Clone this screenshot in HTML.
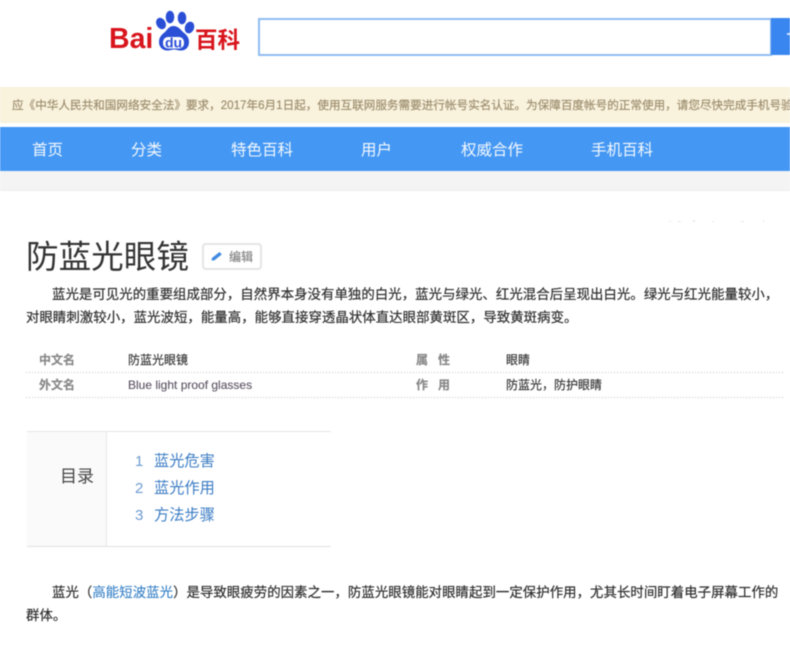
<!DOCTYPE html>
<html lang="zh">
<head>
<meta charset="utf-8">
<title>防蓝光眼镜</title>
<style>
html,body{margin:0;padding:0;background:#fff;}
body{width:790px;height:646px;overflow:hidden;position:relative;font-family:"Liberation Sans","Noto Sans CJK SC",sans-serif;color:#333;}
.a{position:absolute;white-space:nowrap;}
#wrap{position:absolute;left:0;top:0;width:790px;height:646px;overflow:hidden;filter:blur(.4px);}
.n{top:140px;font-size:15.500px;line-height:21px;color:#f4f8fe;}
.t{font-size:13.400px;line-height:20px;color:#2c2c2c;-webkit-text-stroke:.2px #333;letter-spacing:.06px;}
.k{font-size:12px;line-height:17px;font-weight:bold;color:#888;-webkit-text-stroke:.2px #888;}
.v{font-size:12px;line-height:17px;color:#333;-webkit-text-stroke:.15px #333;}
.d{left:26px;width:757px;height:1px;background:repeating-linear-gradient(90deg,#c4c4c4 0 1px,transparent 1px 3px);}
.i{font-size:15.200px;line-height:21px;color:#3b7cc4;}
.o{font-size:15px;line-height:21px;color:#6d9bd1;}
</style>
</head>
<body>
<div id="wrap">
<!-- logo -->
<div class="a" style="left:109px;top:23px;font-size:28.500px;line-height:32px;font-weight:bold;color:#d8141c;">Bai</div>
<svg class="a" style="left:155px;top:9px" width="44" height="46" viewBox="0 0 44 46">
<g fill="#2a4fd6">
<ellipse cx="6" cy="14.500" rx="4.600" ry="6" transform="rotate(-28 6 14.500)"/>
<ellipse cx="15" cy="8" rx="4.300" ry="6.300"/>
<ellipse cx="27" cy="9" rx="4.300" ry="6.300"/>
<ellipse cx="34.500" cy="18.500" rx="4.600" ry="6" transform="rotate(20 34.500 18.500)"/>
<path d="M18.500 17c-4.500 0-6 3.500-9 6.500-3 2-5.500 5-5.500 9.500 0 5 3.500 8.500 8.500 8.500 2.500 0 4.500-1 6.500-1s4 1 7 1c5 0 8-3.500 8-8.500 0-4.500-2.500-7.500-5.500-9.500-3-3-5.500-6.500-10-6.500z"/>
<rect x="8" y="28" width="21" height="11.500" rx="5" fill="#fff"/>
</g>
<text x="18.500" y="38.500" text-anchor="middle" font-family="Liberation Sans" font-size="14" font-weight="bold" fill="#2a4fd6">du</text>
</svg>
<div class="a" style="left:195px;top:27px;font-size:22.500px;line-height:28px;font-weight:bold;color:#d8141c;">百科</div>
<!-- search -->
<div class="a" style="left:258px;top:18px;width:510px;height:34px;border:2px solid #8fbcf0;background:#fff;"></div>
<div class="a" style="left:771px;top:18px;width:19px;height:37px;background:#3a86f0;"></div>
<div class="a" style="left:787px;top:33px;width:3px;height:2px;background:#cfe2fb;"></div>
<!-- notice -->
<div class="a" style="left:0;top:87px;width:790px;height:36px;background:#f9f2dd;"></div>
<div class="a" style="left:12px;top:97px;font-size:11.600px;line-height:17px;color:#9b8c6d;width:778px;overflow:hidden;-webkit-text-stroke:.15px #9b8c6d;">应《中华人民共和国网络安全法》要求，2017年6月1日起，使用互联网服务需要进行帐号实名认证。为保障百度帐号的正常使用，请您尽快完成手机号验证</div>
<!-- nav -->
<div class="a" style="left:0;top:127px;width:790px;height:44px;background:#4498f4;"></div>
<div class="a n" style="left:32px;">首页</div>
<div class="a n" style="left:131px;">分类</div>
<div class="a n" style="left:231px;">特色百科</div>
<div class="a n" style="left:361px;">用户</div>
<div class="a n" style="left:461px;">权威合作</div>
<div class="a n" style="left:591px;">手机百科</div>
<div class="a" style="left:0;top:171px;width:790px;height:19px;background:#f4f4f4;border-bottom:1px solid #ececec;"></div>
<!-- specks -->
<svg class="a" style="left:660px;top:218px" width="130" height="6" viewBox="0 0 130 6"><g fill="#e4e8ee"><rect x="9" y="3" width="2" height="1"/><rect x="18" y="3" width="3" height="1"/><rect x="33" y="2" width="2" height="2"/><rect x="52" y="3" width="2" height="1"/><rect x="81" y="3" width="3" height="1"/><rect x="103" y="2" width="1" height="2"/></g></svg>
<!-- title -->
<div class="a" style="left:26px;top:236px;font-size:32.600px;line-height:42px;color:#333;">防蓝光眼镜</div>
<div class="a" style="left:202px;top:243px;width:56px;height:23px;border:2px solid #e4e4e4;border-radius:4px;background:#fff;"></div>
<svg class="a" style="left:210px;top:250px" width="14" height="13" viewBox="0 0 14 13"><path d="M1.500 10.500l.5-2.500 7.500-6 2.300 2.400-7.500 6z" fill="#3f88e0"/></svg>
<div class="a" style="left:229px;top:250px;font-size:12px;line-height:15px;color:#888;-webkit-text-stroke:.2px #888;">编辑</div>
<!-- intro -->
<div class="a t" style="left:52px;top:285px;">蓝光是可见光的重要组成部分，自然界本身没有单独的白光，蓝光与绿光、红光混合后呈现出白光。绿光与红光能量较小，</div>
<div class="a t" style="left:26px;top:308px;">对眼睛刺激较小，蓝光波短，能量高，能够直接穿透晶状体直达眼部黄斑区，导致黄斑病变。</div>
<!-- basic info -->
<div class="a k" style="left:39px;top:352px;">中文名</div>
<div class="a v" style="left:128px;top:352px;">防蓝光眼镜</div>
<div class="a k" style="left:416px;top:352px;">属&nbsp;&nbsp;&nbsp;性</div>
<div class="a v" style="left:506px;top:352px;">眼睛</div>
<div class="a d" style="top:372px;"></div>
<div class="a k" style="left:39px;top:377px;">外文名</div>
<div class="a v" style="left:128px;top:377px;color:#5a5060;-webkit-text-stroke:.1px #5a5060;">Blue light proof glasses</div>
<div class="a k" style="left:416px;top:377px;">作&nbsp;&nbsp;&nbsp;用</div>
<div class="a v" style="left:506px;top:377px;">防蓝光，防护眼睛</div>
<div class="a d" style="top:397px;"></div>
<!-- toc -->
<div class="a" style="left:27px;top:431px;width:304px;height:114px;border-top:1px solid #e6e6e6;border-bottom:1px solid #e0e0e0;"></div>
<div class="a" style="left:27px;top:432px;width:79px;height:114px;background:#fafafa;border-right:1px solid #e8e8e8;"></div>
<div class="a" style="left:60px;top:465px;font-size:17px;line-height:23px;color:#444;">目录</div>
<div class="a o" style="left:135px;top:451px;">1</div>
<div class="a i" style="left:154px;top:451px;">蓝光危害</div>
<div class="a o" style="left:135px;top:478px;">2</div>
<div class="a i" style="left:154px;top:478px;">蓝光作用</div>
<div class="a o" style="left:135px;top:505px;">3</div>
<div class="a i" style="left:154px;top:505px;">方法步骤</div>
<!-- para -->
<div class="a t" style="left:52px;top:583px;">蓝光（<span style="color:#2f7cc4;-webkit-text-stroke:.1px #2f7cc4">高能短波蓝光</span>）是导致眼疲劳的因素之一，防蓝光眼镜能对眼睛起到一定保护作用，尤其长时间盯着电子屏幕工作的</div>
<div class="a t" style="left:26px;top:606px;">群体。</div>
</div>
</body>
</html>
